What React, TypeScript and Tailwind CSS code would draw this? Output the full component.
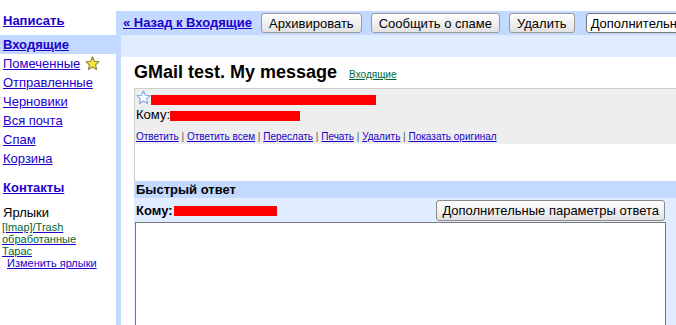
import React from 'react';

const LINK = 'text-[#2200cc] underline';

function Star({ filled }: { filled?: boolean }) {
  return (
    <svg width="15" height="15" viewBox="0 0 24 24" className="shrink-0">
      <polygon
        points="12,1.5 15.1,8.4 22.5,9.1 16.9,14.1 18.5,21.5 12,17.7 5.5,21.5 7.1,14.1 1.5,9.1 8.9,8.4"
        fill={filled ? '#f9e43a' : '#ffffff'}
        stroke={filled ? '#8c8450' : '#7fa6ee'}
        strokeWidth="1.8"
        strokeLinejoin="round"
      />
    </svg>
  );
}

function Btn({ children }: { children: React.ReactNode }) {
  return (
    <div className="shrink-0 h-[20px] px-[7px] flex items-center rounded-[3px] border border-[#9a9a9a] bg-linear-to-b from-white to-[#e2e2e2] text-[13px] text-black leading-none">
      {children}
    </div>
  );
}

export default function App() {
  const folders = ['Отправленные', 'Черновики', 'Вся почта', 'Спам', 'Корзина'];
  const actions = ['Ответить', 'Ответить всем', 'Переслать', 'Печать', 'Удалить', 'Показать оригинал'];

  return (
    <div className="w-[676px] h-[325px] overflow-hidden flex bg-white text-black font-['Liberation_Sans',Arial,sans-serif]">
      {/* sidebar */}
      <div className="w-[116px] shrink-0 pt-[13px] text-[13px]">
        <div className="pl-[3px] leading-[15px]">
          <a className={`${LINK} font-bold`}>Написать</a>
        </div>
        <div className="mt-[7px] h-[19px] bg-[#c3d9ff] pl-[3px] leading-[19px]">
          <a className={`${LINK} font-bold`}>Входящие</a>
        </div>
        <div className="h-[19px] pl-[3px] flex items-center gap-[5px]">
          <a className={LINK}>Помеченные</a>
          <Star filled />
        </div>
        {folders.map((f) => (
          <div key={f} className="h-[19px] pl-[3px] leading-[19px]">
            <a className={LINK}>{f}</a>
          </div>
        ))}
        <div className="mt-[10px] h-[19px] pl-[3px] leading-[19px]">
          <a className={`${LINK} font-bold`}>Контакты</a>
        </div>
        <div className="mt-[8px] h-[16px] pl-[3px] leading-[16px]">Ярлыки</div>
        <div className="text-[11px] leading-[12px] pl-[2px]">
          {['[Imap]/Trash', 'обработанные', 'Тарас'].map((l) => (
            <div key={l}>
              <a className="text-[#006633] underline decoration-[#2200cc]">{l}</a>
            </div>
          ))}
          <div className="pl-[5px]">
            <a className={LINK}>Изменить ярлыки</a>
          </div>
        </div>
      </div>

      {/* main */}
      <div className="flex-1 min-w-0 pt-[11px] flex flex-col">
        <div className="h-[24px] shrink-0 bg-[#c3d9ff] pl-[7px] flex items-center whitespace-nowrap">
          <a className={`${LINK} font-bold text-[13px] mr-[9px]`}>« Назад к Входящие</a>
          <div className="flex gap-[9px]">
            <Btn>Архивировать</Btn>
            <Btn>Сообщить о спаме</Btn>
            <Btn>Удалить</Btn>
          </div>
          <div className="shrink-0 ml-[11px] h-[20px] pl-[4px] pr-[20px] flex items-center rounded-[3px] border border-[#777] bg-white text-[13px] leading-none">
            Дополнительные действия
          </div>
        </div>

        <div className="flex-1 bg-[#c3d9ff] pl-[5px] flex flex-col">
          <div className="h-[22px] shrink-0 bg-[#e0ecff]" />
          <div className="flex-1 bg-white pl-[13px] flex flex-col">
            <div className="pt-[4px] h-[26px] flex items-baseline whitespace-nowrap">
              <h1 className="text-[18px] font-bold leading-[22px]">GMail test. My message</h1>
              <a className="ml-[12px] text-[10px] text-[#006633] underline">Входящие</a>
            </div>

            {/* message */}
            <div className="mt-[5px] border-l border-t border-[#cccccc]">
              <div className="bg-[#eeeeee] pl-[1px] pt-[1px] pb-[1px]">
                <div className="h-[16px] flex items-start">
                  <Star />
                  <div className="mt-[5px] w-[225px] h-[10px] bg-[#ff0000]" />
                </div>
                <div className="h-[17px] flex items-center text-[13px] leading-[15px]">
                  <span>Кому:</span>
                  <div className="mt-[3px] w-[130px] h-[10px] bg-[#ff0000]" />
                </div>
                <div className="mt-[8px] text-[10px] leading-[12px] text-[#555] whitespace-nowrap">
                  {actions.map((a, i) => (
                    <span key={a}>
                      {i > 0 && <span> | </span>}
                      <a className={LINK}>{a}</a>
                    </span>
                  ))}
                </div>
              </div>
              <div className="h-[37px]" />
            </div>

            {/* quick reply */}
            <div className="flex-1 flex flex-col">
              <div className="h-[17px] bg-[#c3d9ff] pl-[2px] text-[13px] font-bold leading-[17px]">Быстрый ответ</div>
              <div className="flex-1 bg-[#e0ecff] pl-[1px] pr-[10px] flex flex-col">
                <div className="pt-[2px] pl-[1px] flex items-center">
                  <span className="text-[13px] font-bold leading-[15px]">Кому:</span>
                  <div className="ml-[1px] w-[103px] h-[10px] bg-[#ff0000]" />
                  <div className="ml-auto mr-[1px]">
                    <div className="h-[21px] px-[5px] flex items-center rounded-[3px] border border-[#8a8a8a] bg-linear-to-b from-white to-[#e2e2e2] text-[13px] leading-none whitespace-nowrap">
                      Дополнительные параметры ответа
                    </div>
                  </div>
                </div>
                <div className="flex-1 mt-[1px] bg-white border border-[#7a7a7a] border-b-0" />
              </div>
            </div>
          </div>
        </div>
      </div>
    </div>
  );
}
